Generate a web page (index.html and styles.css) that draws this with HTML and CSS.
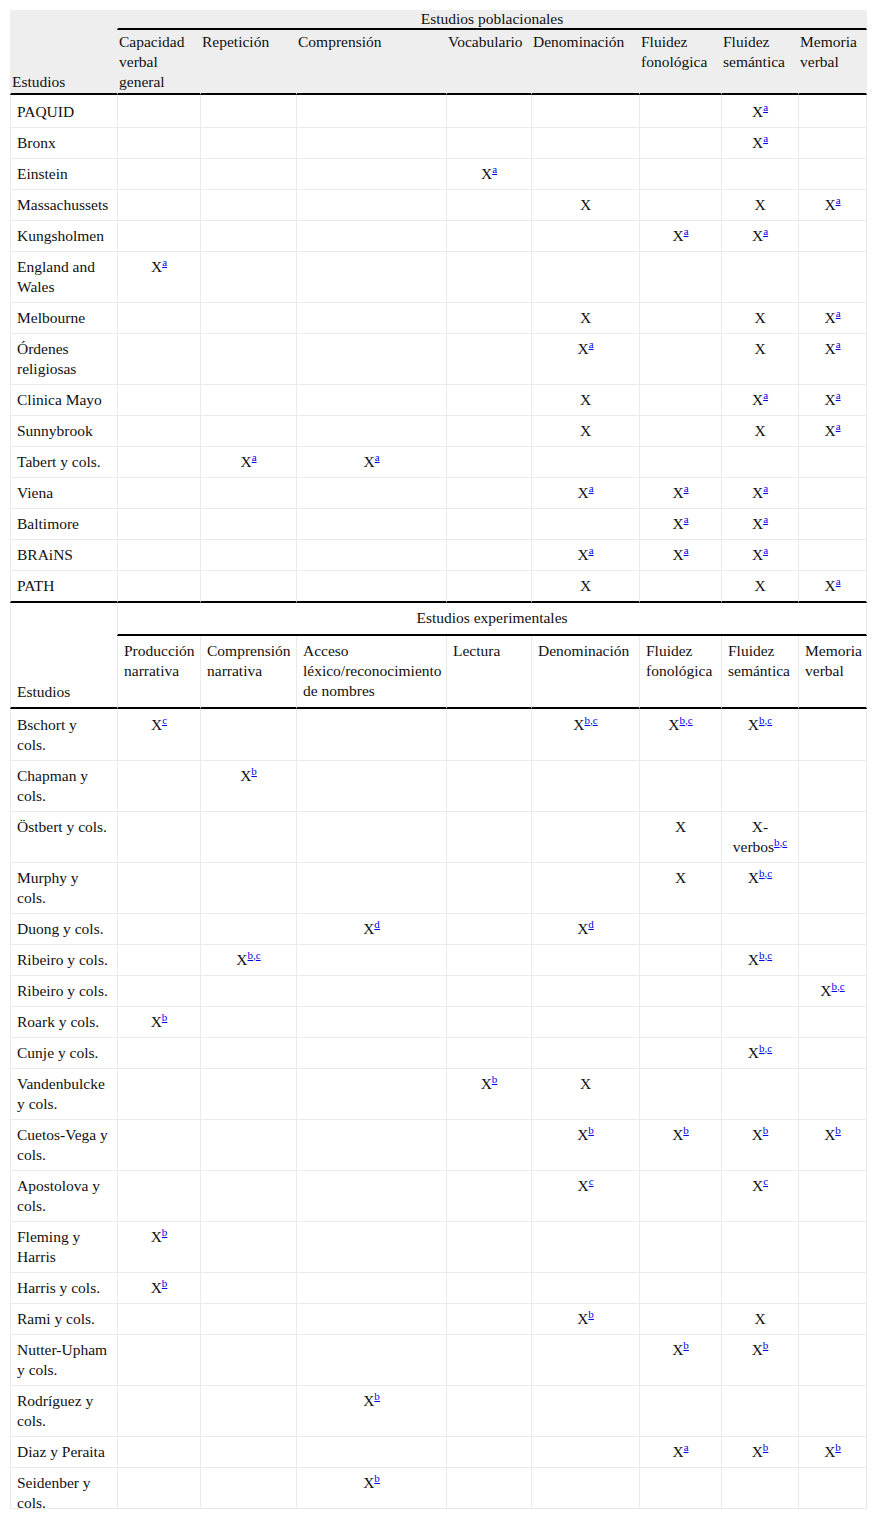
FILE: index.html
```html
<!DOCTYPE html>
<html lang="es">
<head>
<meta charset="utf-8">
<title>Estudios</title>
<link rel="stylesheet" href="styles.css">
</head>
<body>
<div class="wrap">
<table class="tbl">
<colgroup>
<col class="c1"><col class="c2"><col class="c3"><col class="c4"><col class="c5"><col class="c6"><col class="c7"><col class="c8"><col class="c9">
</colgroup>
<thead class="head-pob">
<tr class="r1">
<th rowspan="2" class="lead">Estudios</th>
<th colspan="8" class="group">Estudios poblacionales</th>
</tr>
<tr class="r2">
<th>Capacidad verbal general</th>
<th>Repetición</th>
<th>Comprensión</th>
<th>Vocabulario</th>
<th>Denominación</th>
<th>Fluidez fonológica</th>
<th>Fluidez semántica</th>
<th>Memoria verbal</th>
</tr>
</thead>
<tbody class="body-pob">
<tr class="first"><td>PAQUID</td><td></td><td></td><td></td><td></td><td></td><td></td><td>X<sup><a href="#a">a</a></sup></td><td></td></tr>
<tr><td>Bronx</td><td></td><td></td><td></td><td></td><td></td><td></td><td>X<sup><a href="#a">a</a></sup></td><td></td></tr>
<tr><td>Einstein</td><td></td><td></td><td></td><td>X<sup><a href="#a">a</a></sup></td><td></td><td></td><td></td><td></td></tr>
<tr><td>Massachussets</td><td></td><td></td><td></td><td></td><td>X</td><td></td><td>X</td><td>X<sup><a href="#a">a</a></sup></td></tr>
<tr><td>Kungsholmen</td><td></td><td></td><td></td><td></td><td></td><td>X<sup><a href="#a">a</a></sup></td><td>X<sup><a href="#a">a</a></sup></td><td></td></tr>
<tr><td>England and Wales</td><td>X<sup><a href="#a">a</a></sup></td><td></td><td></td><td></td><td></td><td></td><td></td><td></td></tr>
<tr><td>Melbourne</td><td></td><td></td><td></td><td></td><td>X</td><td></td><td>X</td><td>X<sup><a href="#a">a</a></sup></td></tr>
<tr><td>Órdenes religiosas</td><td></td><td></td><td></td><td></td><td>X<sup><a href="#a">a</a></sup></td><td></td><td>X</td><td>X<sup><a href="#a">a</a></sup></td></tr>
<tr><td>Clinica Mayo</td><td></td><td></td><td></td><td></td><td>X</td><td></td><td>X<sup><a href="#a">a</a></sup></td><td>X<sup><a href="#a">a</a></sup></td></tr>
<tr><td>Sunnybrook</td><td></td><td></td><td></td><td></td><td>X</td><td></td><td>X</td><td>X<sup><a href="#a">a</a></sup></td></tr>
<tr><td>Tabert y cols.</td><td></td><td>X<sup><a href="#a">a</a></sup></td><td>X<sup><a href="#a">a</a></sup></td><td></td><td></td><td></td><td></td><td></td></tr>
<tr><td>Viena</td><td></td><td></td><td></td><td></td><td>X<sup><a href="#a">a</a></sup></td><td>X<sup><a href="#a">a</a></sup></td><td>X<sup><a href="#a">a</a></sup></td><td></td></tr>
<tr><td>Baltimore</td><td></td><td></td><td></td><td></td><td></td><td>X<sup><a href="#a">a</a></sup></td><td>X<sup><a href="#a">a</a></sup></td><td></td></tr>
<tr><td>BRAiNS</td><td></td><td></td><td></td><td></td><td>X<sup><a href="#a">a</a></sup></td><td>X<sup><a href="#a">a</a></sup></td><td>X<sup><a href="#a">a</a></sup></td><td></td></tr>
<tr class="last"><td>PATH</td><td></td><td></td><td></td><td></td><td>X</td><td></td><td>X</td><td>X<sup><a href="#a">a</a></sup></td></tr>
</tbody>
<tbody class="head-exp">
<tr class="r1">
<th rowspan="2" class="lead">Estudios</th>
<th colspan="8" class="group">Estudios experimentales</th>
</tr>
<tr class="r2">
<th>Producción narrativa</th>
<th>Comprensión narrativa</th>
<th>Acceso léxico/reconocimiento de nombres</th>
<th>Lectura</th>
<th>Denominación</th>
<th>Fluidez fonológica</th>
<th>Fluidez semántica</th>
<th>Memoria verbal</th>
</tr>
</tbody>
<tbody class="body-exp">
<tr class="first"><td>Bschort y<br>cols.</td><td>X<sup><a href="#c">c</a></sup></td><td></td><td></td><td></td><td>X<sup><a href="#b">b</a>,<a href="#c">c</a></sup></td><td>X<sup><a href="#b">b</a>,<a href="#c">c</a></sup></td><td>X<sup><a href="#b">b</a>,<a href="#c">c</a></sup></td><td></td></tr>
<tr><td>Chapman y cols.</td><td></td><td>X<sup><a href="#b">b</a></sup></td><td></td><td></td><td></td><td></td><td></td><td></td></tr>
<tr><td>Östbert y cols.</td><td></td><td></td><td></td><td></td><td></td><td>X</td><td>X-verbos<sup><a href="#b">b</a>,<a href="#c">c</a></sup></td><td></td></tr>
<tr><td>Murphy y cols.</td><td></td><td></td><td></td><td></td><td></td><td>X</td><td>X<sup><a href="#b">b</a>,<a href="#c">c</a></sup></td><td></td></tr>
<tr><td>Duong y cols.</td><td></td><td></td><td>X<sup><a href="#d">d</a></sup></td><td></td><td>X<sup><a href="#d">d</a></sup></td><td></td><td></td><td></td></tr>
<tr><td>Ribeiro y cols.</td><td></td><td>X<sup><a href="#b">b</a>,<a href="#c">c</a></sup></td><td></td><td></td><td></td><td></td><td>X<sup><a href="#b">b</a>,<a href="#c">c</a></sup></td><td></td></tr>
<tr><td>Ribeiro y cols.</td><td></td><td></td><td></td><td></td><td></td><td></td><td></td><td>X<sup><a href="#b">b</a>,<a href="#c">c</a></sup></td></tr>
<tr><td>Roark y cols.</td><td>X<sup><a href="#b">b</a></sup></td><td></td><td></td><td></td><td></td><td></td><td></td><td></td></tr>
<tr><td>Cunje y cols.</td><td></td><td></td><td></td><td></td><td></td><td></td><td>X<sup><a href="#b">b</a>,<a href="#c">c</a></sup></td><td></td></tr>
<tr><td>Vandenbulcke y cols.</td><td></td><td></td><td></td><td>X<sup><a href="#b">b</a></sup></td><td>X</td><td></td><td></td><td></td></tr>
<tr><td>Cuetos-Vega y cols.</td><td></td><td></td><td></td><td></td><td>X<sup><a href="#b">b</a></sup></td><td>X<sup><a href="#b">b</a></sup></td><td>X<sup><a href="#b">b</a></sup></td><td>X<sup><a href="#b">b</a></sup></td></tr>
<tr><td>Apostolova y cols.</td><td></td><td></td><td></td><td></td><td>X<sup><a href="#c">c</a></sup></td><td></td><td>X<sup><a href="#c">c</a></sup></td><td></td></tr>
<tr><td>Fleming y Harris</td><td>X<sup><a href="#b">b</a></sup></td><td></td><td></td><td></td><td></td><td></td><td></td><td></td></tr>
<tr><td>Harris y cols.</td><td>X<sup><a href="#b">b</a></sup></td><td></td><td></td><td></td><td></td><td></td><td></td><td></td></tr>
<tr><td>Rami y cols.</td><td></td><td></td><td></td><td></td><td>X<sup><a href="#b">b</a></sup></td><td></td><td>X</td><td></td></tr>
<tr><td>Nutter-Upham y cols.</td><td></td><td></td><td></td><td></td><td></td><td>X<sup><a href="#b">b</a></sup></td><td>X<sup><a href="#b">b</a></sup></td><td></td></tr>
<tr><td>Rodríguez y cols.</td><td></td><td></td><td>X<sup><a href="#b">b</a></sup></td><td></td><td></td><td></td><td></td><td></td></tr>
<tr><td>Diaz y Peraita</td><td></td><td></td><td></td><td></td><td></td><td>X<sup><a href="#a">a</a></sup></td><td>X<sup><a href="#b">b</a></sup></td><td>X<sup><a href="#b">b</a></sup></td></tr>
<tr><td>Seidenber y cols.</td><td></td><td></td><td>X<sup><a href="#b">b</a></sup></td><td></td><td></td><td></td><td></td><td></td></tr>
</tbody>
</table>
</div>
</body>
</html>
```

FILE: styles.css
```css
html, body {
  background: #fff;
}
body {
  margin: 10px;
  font-family: "Liberation Serif", "Times New Roman", serif;
  font-size: 15.5px;
  color: #111;
}
.wrap {
  width: 857px;
  height: 1498px;
  overflow: hidden;
  border-bottom: 1px solid #e8e8e8;
}
.tbl {
  width: 857px;
  border-collapse: separate;
  border-spacing: 0;
  table-layout: fixed;
  line-height: 20px;
}
.c1 { width: 107px; }
.c2 { width: 83px; }
.c3 { width: 96px; }
.c4 { width: 150px; }
.c5 { width: 85px; }
.c6 { width: 108px; }
.c7 { width: 82px; }
.c8 { width: 77px; }
.c9 { width: 69px; }

.tbl th,
.tbl td {
  padding: 5px 6px;
  border-left: 1px solid #ebebeb;
  border-bottom: 1px solid #ebebeb;
  vertical-align: top;
  font-weight: normal;
  text-align: left;
}
.tbl tr > :last-child {
  border-right: 1px solid #ebebeb;
}
.tbl td {
  text-align: center;
}
.tbl td:first-child {
  text-align: left;
}

/* first header block (grey) */
.head-pob th {
  background: #eeeeee;
  border-left-color: #eeeeee;
  border-bottom-color: #eeeeee;
  padding: 2px 1px 1px 1px;
}
.head-pob tr > :last-child {
  border-right-color: #eeeeee;
}
.head-pob .r1 .group {
  padding: 0 1px;
  line-height: 18px;
  text-align: center;
  border-bottom: 2px solid #000;
}
.head-pob .r2 th {
  border-bottom: 2px solid #000;
}
.head-pob .lead {
  vertical-align: bottom;
  border-bottom: 2px solid #000;
}

/* second header block (white) */
.head-exp th {
  background: #fff;
}
.head-exp .r1 .group {
  text-align: center;
  padding-bottom: 6px;
  border-bottom: 2px solid #000;
}
.head-exp .r2 th {
  padding-bottom: 6px;
  border-bottom: 2px solid #000;
}
.head-exp .lead {
  vertical-align: bottom;
  border-bottom: 2px solid #000;
}

.body-pob .first td {
  padding-top: 7px;
}
.body-pob .last td {
  border-bottom: 2px solid #000;
}
.body-exp .first td {
  padding-top: 6px;
}

sup {
  font-size: 11px;
  line-height: 0;
  vertical-align: 6px;
  color: #0000ee;
}
sup a {
  color: #0000ee;
  text-decoration: underline;
}
```
